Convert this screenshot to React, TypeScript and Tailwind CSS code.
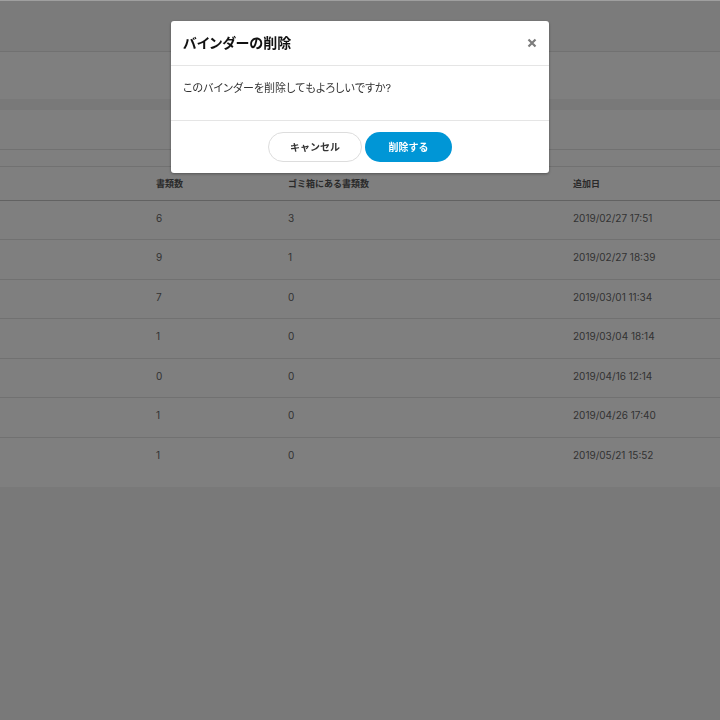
const binders = [
  { documents: 6, trashed: 3, added: "2019/02/27 17:51" },
  { documents: 9, trashed: 1, added: "2019/02/27 18:39" },
  { documents: 7, trashed: 0, added: "2019/03/01 11:34" },
  { documents: 1, trashed: 0, added: "2019/03/04 18:14" },
  { documents: 0, trashed: 0, added: "2019/04/16 12:14" },
  { documents: 1, trashed: 0, added: "2019/04/26 17:40" },
  { documents: 1, trashed: 0, added: "2019/05/21 15:52" },
];

function BinderTable() {
  return (
    <table className="w-full table-fixed border-collapse text-left text-[10px] leading-4 text-[#666]">
      <colgroup>
        <col className="w-[148px]" />
        <col className="w-[132px]" />
        <col />
        <col className="w-[155px]" />
      </colgroup>
      <thead>
        <tr className="h-[34px] border-t border-b border-t-[#e2e2e2] border-b-[#c4c4c4] text-[9px] text-[#555]">
          <td />
          <th scope="col" className="px-2 font-bold">書類数</th>
          <th scope="col" className="px-2 font-bold">ゴミ箱にある書類数</th>
          <th scope="col" className="px-2 font-bold">追加日</th>
        </tr>
      </thead>
      <tbody>
        {binders.map((b) => (
          <tr
            key={b.added}
            className="border-b border-[#e2e2e2] align-top last:border-b-0 odd:h-[39px] even:h-[40px]"
          >
            <td />
            <td className="px-2 pt-[9px]">{b.documents}</td>
            <td className="px-2 pt-[9px]">{b.trashed}</td>
            <td className="px-2 pt-[9px]">{b.added}</td>
          </tr>
        ))}
      </tbody>
    </table>
  );
}

function DeleteDialog() {
  return (
    <div className="fixed inset-0 flex items-start justify-center border-t border-white/25 bg-black/50 px-4 pt-5">
      <div
        role="dialog"
        aria-modal="true"
        aria-labelledby="dialog-title"
        className="w-full max-w-[378px] rounded-[3px] bg-white shadow-[0_1px_3px_rgba(0,0,0,0.35)]"
      >
        <header className="flex h-[45px] items-center justify-between border-b border-[#e5e5e5] px-3">
          <h2 id="dialog-title" className="text-[14px] leading-5 font-bold text-[#111] [font-feature-settings:'palt'] [font-kerning:none]">
            バインダーの削除
          </h2>
          <button type="button" aria-label="閉じる" className="flex size-[10px] items-center justify-center text-[#7d7d7d]">
            <svg viewBox="0 0 10 10" className="size-[10px]" stroke="currentColor" strokeWidth="2.2">
              <path d="M1.5 1.5 8.5 8.5M8.5 1.5 1.5 8.5" />
            </svg>
          </button>
        </header>
        <p className="h-[54px] px-3 pt-[14px] text-[11px] leading-4 text-[#333] [font-feature-settings:'palt'] [font-kerning:none]">
          このバインダーを削除してもよろしいですか?
        </p>
        <footer className="flex justify-center gap-[3px] border-t border-[#e5e5e5] pt-[11px] pb-[11px] text-[10px] font-bold">
          <button type="button" className="h-[30px] w-[94px] rounded-full border border-[#ddd] bg-white text-[#333]">
            キャンセル
          </button>
          <button type="button" className="h-[30px] w-[87px] rounded-full bg-[#0096d6] text-white">
            削除する
          </button>
        </footer>
      </div>
    </div>
  );
}

export default function App() {
  return (
    <div className="min-h-screen bg-[#f3f3f3] font-['Inter','Noto_Sans_CJK_JP',sans-serif]">
      <header className="h-[52px] border-t border-b border-t-white border-b-[#e2e2e2] bg-[#f7f7f7]" />
      <div className="h-[47px] bg-white" />
      <main className="mt-[11px] bg-white pb-[10px]">
        <div className="h-10 border-b border-[#e2e2e2]" />
        <div className="h-4" />
        <BinderTable />
      </main>
      <DeleteDialog />
    </div>
  );
}
